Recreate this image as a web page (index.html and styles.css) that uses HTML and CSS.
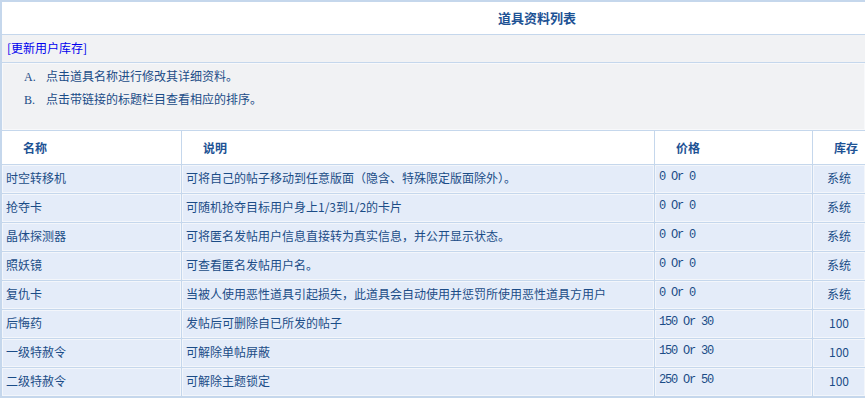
FILE: index.html
```html
<!DOCTYPE html>
<html lang="zh-CN">
<head>
  <meta charset="UTF-8">
  <title>道具资料列表</title>
  <link rel="stylesheet" href="styles.css">
</head>
<body>

<table class="grid">
  <colgroup>
    <col class="c-name">
    <col class="c-desc">
    <col class="c-price">
    <col class="c-stock">
  </colgroup>

  <!-- 标题 -->
  <tr>
    <th class="title" colspan="4">道具资料列表</th>
  </tr>
  <tr>
    <td class="tools" colspan="4"><a href="#">[更新用户库存]</a></td>
  </tr>
  <tr>
    <td class="tips" colspan="4">
      <ul class="tip-list">
        <li><span class="mark">A.</span>点击道具名称进行修改其详细资料。</li>
        <li><span class="mark">B.</span>点击带链接的标题栏目查看相应的排序。</li>
      </ul>
    </td>
  </tr>

  <!-- 列表 -->
  <tr class="head">
    <th>名称</th>
    <th>说明</th>
    <th>价格</th>
    <th>库存</th>
  </tr>
  <tr class="row">
    <td>时空转移机</td>
    <td>可将自己的帖子移动到任意版面（隐含、特殊限定版面除外）。</td>
    <td class="price">0 Or 0</td>
    <td class="stock">系统</td>
  </tr>
  <tr class="row">
    <td>抢夺卡</td>
    <td>可随机抢夺目标用户身上1/3到1/2的卡片</td>
    <td class="price">0 Or 0</td>
    <td class="stock">系统</td>
  </tr>
  <tr class="row">
    <td>晶体探测器</td>
    <td>可将匿名发帖用户信息直接转为真实信息，并公开显示状态。</td>
    <td class="price">0 Or 0</td>
    <td class="stock">系统</td>
  </tr>
  <tr class="row">
    <td>照妖镜</td>
    <td>可查看匿名发帖用户名。</td>
    <td class="price">0 Or 0</td>
    <td class="stock">系统</td>
  </tr>
  <tr class="row">
    <td>复仇卡</td>
    <td>当被人使用恶性道具引起损失，此道具会自动使用并惩罚所使用恶性道具方用户</td>
    <td class="price">0 Or 0</td>
    <td class="stock">系统</td>
  </tr>
  <tr class="row">
    <td>后悔药</td>
    <td>发帖后可删除自已所发的帖子</td>
    <td class="price">150 Or 30</td>
    <td class="stock">100</td>
  </tr>
  <tr class="row">
    <td>一级特赦令</td>
    <td>可解除单帖屏蔽</td>
    <td class="price">150 Or 30</td>
    <td class="stock">100</td>
  </tr>
  <tr class="row">
    <td>二级特赦令</td>
    <td>可解除主题锁定</td>
    <td class="price">250 Or 50</td>
    <td class="stock">100</td>
  </tr>
</table>

</body>
</html>
```

FILE: styles.css
```css
:root {
  --line: #c5d7ec;
  --text: #1b4c87;
  --head: #1d5294;
  --row-bg: #e4ecf9;
  --panel-bg: #f1f2f4;
}

html, body {
  overflow: hidden;
}

body {
  margin: 0;
  background: #fff;
  font-family: "Noto Sans CJK SC", "Noto Sans", sans-serif;
  font-size: 12px;
  color: var(--text);
}

.grid {
  width: 867px;
  table-layout: fixed;
  border-collapse: separate;
  border-spacing: 1px;
  border: 1px solid var(--line);
  background: var(--line);
}

.c-name  { width: 179px; }
.c-desc  { width: 472px; }
.c-price { width: 157px; }
.c-stock { width: 52px; }

.grid th,
.grid td {
  box-sizing: border-box;
  padding: 0;
  white-space: nowrap;
  overflow: hidden;
}

/* 顶部 */

.title {
  height: 32px;
  background: #fff;
  color: var(--head);
  font-size: 13px;
  font-weight: bold;
  text-align: center;
  padding: 0 0 2px 207px !important;
}

.tools {
  height: 27px;
  background: var(--panel-bg);
  padding: 0 0 2px 5px !important;
}

.tools a {
  color: #0000ee;
  text-decoration: none;
}

.tips {
  height: 67px;
  background: var(--panel-bg);
  border: 1px solid #f8f9fb;
  vertical-align: top;
}

.tip-list {
  list-style: none;
  margin: 0;
  padding: 1px 0 0 21px;
}

.tip-list li {
  line-height: 21px;
}

.mark {
  display: inline-block;
  width: 22px;
  font-family: "Liberation Serif", serif;
}

/* 列表 */

.head th {
  height: 33px;
  background: #fff;
  color: var(--head);
  font-weight: bold;
  text-align: left;
  padding: 0 0 1px 21px;
}

.row td {
  height: 28px;
  background: var(--row-bg);
  border: 1px solid #f3f6fb;
  padding: 0 0 4px 3px;
}

.row .price {
  font-family: "Liberation Mono", monospace;
  letter-spacing: -1.2px;
}

.row .stock {
  text-align: center;
  padding-left: 0;
}
```
